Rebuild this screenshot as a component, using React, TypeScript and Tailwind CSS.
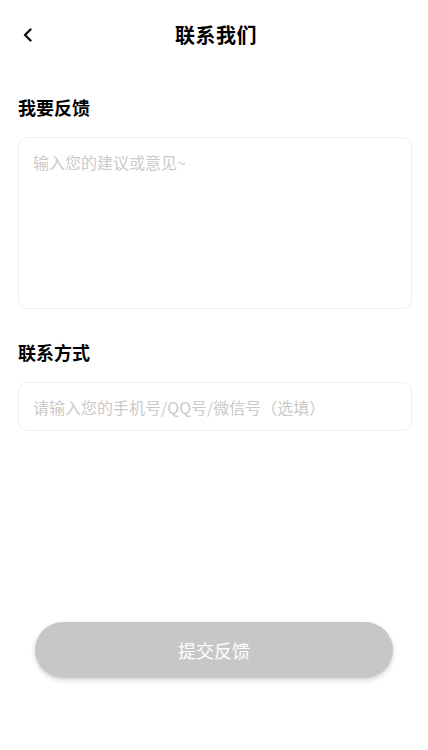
import React from 'react';

const font = { fontFamily: '"Noto Sans CJK SC", "Noto Sans", sans-serif' };

export default function App() {
  return (
    <div className="w-[428px] h-[750px] bg-white flex flex-col text-black" style={font}>
      {/* Header */}
      <header className="relative h-[70px] flex items-center justify-center">
        <button className="absolute left-[18px] top-[24px] w-[20px] h-[22px] flex items-center justify-center">
          <svg width="12" height="14" viewBox="0 0 12 14" fill="none">
            <path d="M8.5 1.5 L3 7 L8.5 12.5" stroke="#111" strokeWidth="2.4" strokeLinecap="round" strokeLinejoin="round" />
          </svg>
        </button>
        <h1 className="ml-[4px] text-[20px] font-bold leading-none tracking-[0.5px]">联系我们</h1>
      </header>

      <main className="flex-1 flex flex-col pl-[18px] pr-[16px]">
        <h2 className="mt-[24px] text-[18px] font-bold leading-[26px]">我要反馈</h2>
        <textarea
          className="mt-[17px] h-[172px] w-full resize-none rounded-[9px] border border-[#efefef] px-[14px] py-[12px] text-[16px] leading-[24px] text-[#333] placeholder:text-[#cacaca] outline-none"
          placeholder="输入您的建议或意见~"
          style={font}
        />

        <h2 className="mt-[30px] text-[18px] font-bold leading-[26px]">联系方式</h2>
        <input
          className="mt-[17px] h-[49px] w-full rounded-[9px] border border-[#efefef] px-[14px] text-[16px] text-[#333] placeholder:text-[#cacaca] outline-none"
          placeholder="请输入您的手机号/QQ号/微信号（选填）"
          style={font}
        />

        <div className="flex-1" />

        <div className="flex justify-center pb-[72px] pr-[2px]">
          <button className="w-[358px] h-[56px] rounded-full bg-[#c7c7c9] text-white text-[18px] shadow-[0_2px_5px_rgba(0,0,0,0.18)]">
            提交反馈
          </button>
        </div>
      </main>
    </div>
  );
}
